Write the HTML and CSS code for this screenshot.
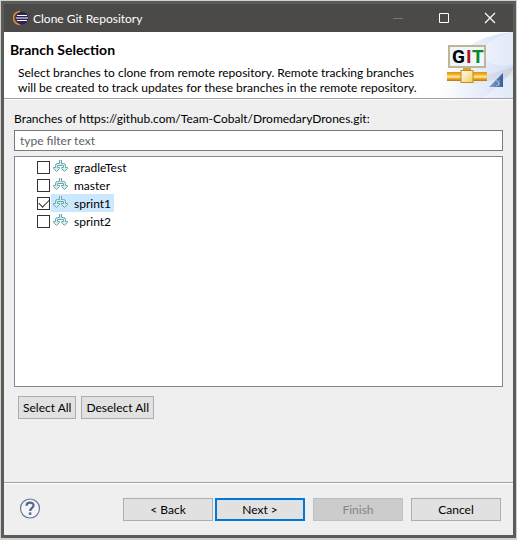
FILE: index.html
```html
<!DOCTYPE html>
<html lang="en">
<head>
<meta charset="utf-8">
<title>Clone Git Repository</title>
<link rel="stylesheet" href="styles.css">
</head>
<body>
<main class="window">
  <header class="titlebar">
    <svg class="app-icon" width="16" height="16" viewBox="0 0 16 16" aria-hidden="true">
      <path d="M7 1.500A6.500 6.500 0 0 0 7 14.500" fill="none" stroke="#e08a2c" stroke-width="1.500"/>
      <circle cx="9" cy="8" r="6.300" fill="#2c2255"/>
      <path d="M4 5.500H14M3 8H15M4 10.500H14" stroke="#fff" stroke-width="1.200"/>
    </svg>
    <span class="title">Clone Git Repository</span>
    <button class="caption" type="button" aria-label="Minimize" disabled>
      <svg width="12" height="12" viewBox="0 0 12 12"><path d="M1 6.500H11" stroke="#777674"/></svg>
    </button>
    <button class="caption" type="button" aria-label="Maximize">
      <svg width="12" height="12" viewBox="0 0 12 12"><path d="M1.500 1.500H10.500V10.500H1.500Z" fill="none" stroke="#fff"/></svg>
    </button>
    <button class="caption" type="button" aria-label="Close">
      <svg width="12" height="12" viewBox="0 0 12 12"><path d="M1 1L11 11M11 1L1 11" stroke="#fff" stroke-width="1.200"/></svg>
    </button>
  </header>

  <section class="banner">
    <div class="banner-text">
      <h1>Branch Selection</h1>
      <p>Select branches to clone from remote repository. Remote tracking branches<br>will be created to track updates for these branches in the remote repository.</p>
    </div>
    <svg class="banner-art" width="75" height="66" viewBox="0 0 75 66" role="img" aria-label="Git">
      <defs>
        <linearGradient id="sky" x1="0" y1="0" x2="1" y2="0"><stop offset="0" stop-color="#fff"/><stop offset="1" stop-color="#d3def5"/></linearGradient>
        <linearGradient id="beam" x1="0" y1="0" x2="1" y2="0"><stop offset="0" stop-color="#d5d8e2" stop-opacity="0"/><stop offset="1" stop-color="#ced2de"/></linearGradient>
        <linearGradient id="pipe" x1="0" y1="0" x2="0" y2="1"><stop offset="0" stop-color="#d89410"/><stop offset=".3" stop-color="#f2b72c"/><stop offset=".55" stop-color="#ffe9a0"/><stop offset=".75" stop-color="#e8a51c"/><stop offset="1" stop-color="#b87808"/></linearGradient>
        <linearGradient id="hub" x1="0" y1="0" x2="1" y2="1"><stop offset="0" stop-color="#fff"/><stop offset="1" stop-color="#f5c95a"/></linearGradient>
        <linearGradient id="wedge" x1="0" y1="0" x2="1" y2="0"><stop offset="0" stop-color="#8ea6cc"/><stop offset="1" stop-color="#345c9c"/></linearGradient>
      </defs>
      <path d="M0 66C2 32 28 4 75 0V66Z" fill="url(#sky)"/>
      <path d="M38 22Q55 4 75 0V32Q55 38 38 22Z" fill="#fff" opacity=".35"/>
      <path d="M24 50L75 35V44L36 52Z" fill="url(#beam)"/>
      <path d="M44 66Q62 55 75 38V66Z" fill="#fff" opacity=".35"/>
      <rect x="11" y="14" width="36" height="21" fill="#eef6fc" stroke="#bdb596" stroke-width="2"/>
      <g class="git-label"><text x="14" y="31">G</text><text x="28" y="31" fill="#b5121b">I</text><text x="34" y="31" fill="#0a8a1c">T</text></g>
      <rect x="25" y="36" width="8" height="4" fill="#e3a51f"/>
      <rect x="9" y="40" width="40" height="9" fill="url(#pipe)"/>
      <rect x="23" y="38.500" width="12" height="12" fill="url(#hub)" stroke="#c28a16"/>
      <path d="M65 41V55H51Z" fill="url(#wedge)"/>
      <path d="M58 48L61 52L58 54M61 48V54" fill="none" stroke="#c5d4ea" stroke-width=".7"/>
    </svg>
  </section>

  <form class="content">
    <label for="filter">Branches of https://github.com/Team-Cobalt/DromedaryDrones.git:</label>
    <input class="filter" id="filter" type="text" placeholder="type filter text">
    <ul class="tree">
      <li><input type="checkbox" id="b1"><label for="b1"><svg class="branch" width="16" height="16" viewBox="0 0 16 16"><use href="#branch-icon"/></svg><span>gradleTest</span></label></li>
      <li><input type="checkbox" id="b2"><label for="b2"><svg class="branch" width="16" height="16" viewBox="0 0 16 16"><use href="#branch-icon"/></svg><span>master</span></label></li>
      <li><input type="checkbox" id="b3" checked><label class="selected" for="b3"><svg class="branch" width="16" height="16" viewBox="0 0 16 16"><use href="#branch-icon"/></svg><span>sprint1</span></label></li>
      <li><input type="checkbox" id="b4"><label for="b4"><svg class="branch" width="16" height="16" viewBox="0 0 16 16"><use href="#branch-icon"/></svg><span>sprint2</span></label></li>
    </ul>
    <div class="selection-actions">
      <button class="btn" type="button">Select All</button>
      <button class="btn" type="button">Deselect All</button>
    </div>
  </form>

  <footer class="footer">
    <button class="help" type="button" aria-label="Help">
      <svg width="22" height="22" viewBox="0 0 22 22">
        <circle cx="11" cy="10.500" r="9.500" fill="#f4f5f8" stroke="#66799a" stroke-width="1.200"/>
        <path d="M7.500 7.800C7.500 3.700 14.600 3.700 14.600 7.500C14.600 9.800 11.200 10.100 11.200 12.900" fill="none" stroke="#536788" stroke-width="2.200"/>
        <circle cx="11.100" cy="15.700" r="1.400" fill="#536788"/>
      </svg>
    </button>
    <div class="pair">
      <button class="btn wide" type="button">&lt; Back</button>
      <button class="btn wide primary" type="button">Next &gt;</button>
    </div>
    <button class="btn wide" type="button" disabled>Finish</button>
    <button class="btn wide" type="button">Cancel</button>
  </footer>
</main>
<svg class="symbols" width="0" height="0" aria-hidden="true">
  <symbol id="branch-icon" viewBox="0 0 16 16">
    <path d="M6.500 1V4.500H4.500Q2.500 4.500 2.500 6.500V8.500H.500V9.500L3.500 12.500L6.500 9.500V8.500H4.500V6.500H10.500V8.500H8.500V9.500L11.500 12.500L14.500 9.500V8.500H12.500V6.500Q12.500 4.500 10.500 4.500H8.500V1" fill="#d0efef" stroke="#6fa6a8"/>
  </symbol>
</svg>
</body>
</html>
```
FILE: styles.css
```css
* {
  box-sizing: border-box;
}

body {
  margin: 0;
  min-height: 100vh;
  padding: 1px 1px 2px;
  display: flex;
  background: #cfd1ce;
  color: #000;
  font: 12px/15px Lato, "Noto Sans", sans-serif;
}

button,
input {
  font: inherit;
  color: inherit;
}

.window {
  flex: 1;
  min-width: 0;
  display: flex;
  flex-direction: column;
  border: 3px solid #5a5c58;
  background: #efefef;
}

.titlebar {
  display: flex;
  align-items: center;
  height: 28px;
  padding-left: 9px;
  background: #4b4a48;
  color: #fff;
}

.title {
  flex: 1;
  margin-left: 4px;
}

.caption {
  display: flex;
  align-items: center;
  justify-content: center;
  width: 46px;
  height: 24px;
  padding: 0;
  border: 0;
  background: none;
}

.banner {
  display: flex;
  justify-content: space-between;
  height: 67px;
  background: #fff;
  border-bottom: 1px solid #a0a0a0;
}

.banner-text {
  padding: 9px 0 0 6px;
  white-space: nowrap;
}

.banner-art {
  flex: none;
}

.git-label {
  font: bold 19px Roboto, sans-serif;
}

h1 {
  margin: 0;
  font-size: 14px;
  line-height: 17px;
}

p {
  margin: 7px 0 0 8px;
}

.content {
  flex: 1;
  display: flex;
  flex-direction: column;
  padding: 11px 10px 0;
  border-top: 1px solid #fff;
}

.filter {
  height: 21px;
  margin: 4px 0 5px;
  padding: 0 5px;
  border: 1px solid #7a7a7a;
  background: #fff;
}

.filter::placeholder {
  color: #606060;
  opacity: 1;
}

.tree {
  flex: 1;
  margin: 0;
  padding: 1px 0 0 22px;
  border: 1px solid #828790;
  background: #fff;
  list-style: none;
}

.tree li {
  display: flex;
  align-items: center;
  height: 18px;
}

.tree input {
  appearance: none;
  display: grid;
  place-content: center;
  width: 13px;
  height: 13px;
  margin: 0 1px 0 0;
  border: 1px solid #333;
  background: #fff;
}

.tree input:checked::before {
  content: "";
  width: 9px;
  height: 5px;
  border: solid #333;
  border-width: 0 0 1px 1px;
  transform: translateY(-1px) rotate(-45deg);
}

.tree label {
  display: flex;
  align-items: center;
  gap: 5px;
  height: 18px;
  padding: 0 3px 0 2px;
}

.tree .selected {
  background: #cce8ff;
}

.selection-actions {
  display: flex;
  gap: 5px;
  padding: 9px 4px 63px;
}

.btn {
  height: 23px;
  padding: 0 4px;
  border: 1px solid #adadad;
  background: #e1e1e1;
  white-space: nowrap;
}

.wide {
  width: 90px;
}

.primary {
  border: 2px solid #0078d7;
}

.btn:disabled {
  border-color: #bfbfbf;
  background: #ccc;
  color: #838383;
}

.footer {
  display: flex;
  align-items: center;
  gap: 8px;
  height: 53px;
  padding: 0 12px 0 15px;
  border-top: 1px solid #a0a0a0;
  box-shadow: inset 0 1px #fff;
}

.help {
  display: flex;
  margin-right: auto;
  padding: 0;
  border: 0;
  background: none;
}

.pair {
  display: flex;
  gap: 2px;
}

.symbols {
  position: absolute;
}
```
